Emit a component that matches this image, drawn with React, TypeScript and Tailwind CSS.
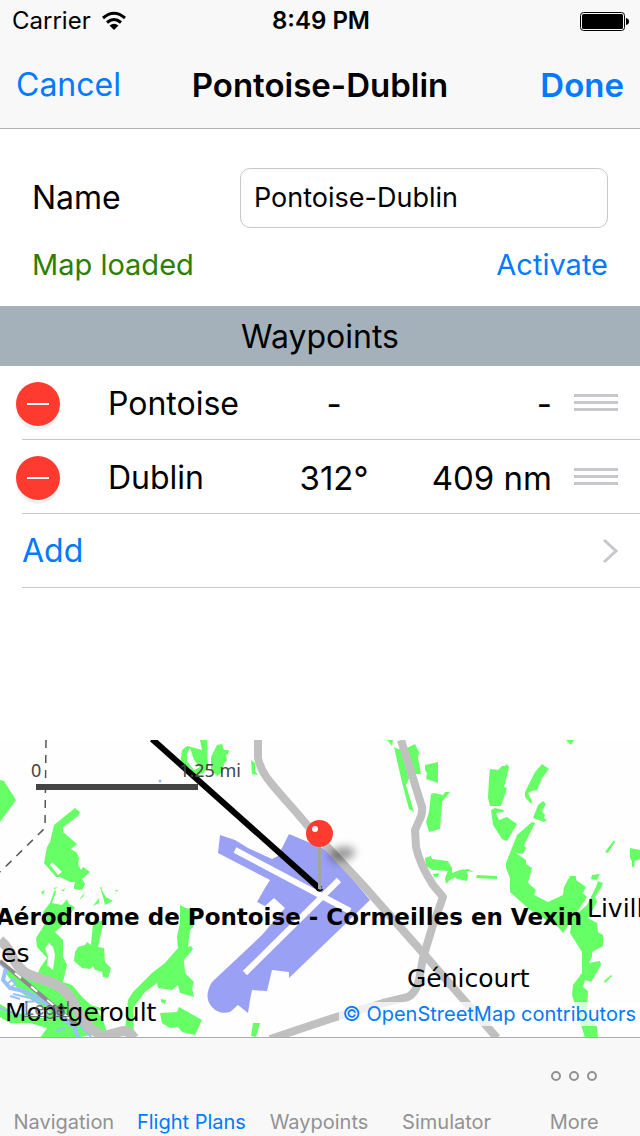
import React, { useState } from 'react';

interface Waypoint {
  id: string;
  name: string;
  bearing: string;
  distance: string;
}

const WAYPOINTS: Waypoint[] = [
  { id: 'pontoise', name: 'Pontoise', bearing: '-', distance: '-' },
  { id: 'dublin', name: 'Dublin', bearing: '312°', distance: '409 nm' },
];

const TABS = ['Navigation', 'Flight Plans', 'Waypoints', 'Simulator', 'More'];

// Woodland outlines, in map units
const WOODS = [
  '0,40 4,41 16,60 0,82',
  '75,68 80,72 78,76 63,87 63,92 77,104 71,109 77,113 79,118 78,124 81,130 83,127 90,132 82,139 85,144 82,150 74,148 75,142 70,142 60,137 56,137 44,123 47,107 50,102 54,85',
  '180,25 182,10 187,6 195,8 202,10 200,0 207,0 208,28 203,33 196,36 190,28 184,25',
  '211,17 217,5 222,4 224,10 229,10 228,14 226,15 227,21 224,23 223,32 217,36 211,30',
  '251,20 255,23 255,31 258,35 252,34',
  '387,0 393,0 392,6',
  '394,7 398,9 407,8 415,4 419,12 418,18 421,34 411,34 406,45 411,62 414,72 409,69 406,58 402,42 398,25',
  '425,25 438,22 438,43 426,39 427,33 425,30',
  '431,54 434,53 443,55 445,52 450,52 442,62 440,89 429,92 426,82 429,72',
  '566,0 574,0 571,5',
  '490,29 498,30 502,26 505,26 507,24 509,27 504,47 507,48 501,66 490,66 488,58 489,38',
  '491,70 495,68 504,70 503,72 496,73 499,80 507,77 517,84 507,101 502,99 493,85',
  '542,24 549,29 542,38 540,43 537,50 532,51 528,53 532,61 531,64 525,57 525,52 535,32',
  '543,61 546,64 542,71 545,75 544,78 547,80 544,82 533,78 538,65',
  '532,82 535,83 528,97 524,105 526,108 523,114 516,113 526,120 526,124 532,128 528,143 536,150 534,155 548,162 563,155 564,147 570,136 576,136 576,140 586,147 583,153 587,157 563,193 558,187 530,170 510,152 510,138 506,128 506,123 517,95',
  '602,145 600,149 595,157 597,162 588,178 597,183 598,192 603,195 603,206 592,212 592,217 589,223 600,221 601,225 591,242 585,240 583,247 588,251 587,272 597,287 598,298 585,298 582,288 572,255 573,245 582,233 582,212 570,193 572,178 587,165 597,145',
  '605,112 614,100 615,102 608,113',
  '630,108 640,110 640,119 635,121 634,127 632,127 632,121 630,118',
  '592,135 600,134 597,140 591,139',
  '598,141 603,143 600,150 595,150',
  '425,118 431,116 432,119 448,121 452,128 452,133 460,130 468,129 474,132 466,131 468,135 467,141 457,139 455,137 450,140 446,144 445,138 448,131 432,130 426,126',
  '433,134 439,133 438,137 434,137',
  '477,135 497,136 497,139 476,138',
  '604,241 611,235 612,236 605,243',
  '55,149 56,152 52,163 62,165 67,159 69,164 75,167 63,185 55,192 63,200 63,217 67,225 63,242 72,245 83,258 97,270 103,280 107,292 75,298 40,298 47,288 30,283 10,283 0,277 0,264 13,272 43,278 50,272 20,252 3,230 12,230 20,235 38,233 40,228 47,218 37,207 36,198 43,187 47,178 43,172 50,163',
  '86,264 101,268 102,271 90,268',
  '93,183 104,180 98,207 104,208 105,222 111,228 108,238 103,237 102,232 95,230 93,226 90,229 82,228 74,221 75,212 78,207 85,205 87,202 91,205',
  '100,147 106,157 113,161 105,165 103,157',
  '74,145 82,145 80,150 74,149',
  '79,160 85,152 83,157',
  '93,166 99,158 99,163',
  '115,150 118,150 117,152',
  '41,152 45,150 43,155',
  '61,151 65,148 64,151',
  '53,148 58,147 55,149',
  '100,147 103,148 101,149',
  '180,165 186,168 195,170 193,187 190,190 188,207 191,206 193,209 184,220 185,233 194,242 192,248 194,257 180,253 178,245 172,250 158,248 157,243 145,252 133,268 134,298 125,290 128,260 133,252 152,233 165,223 178,208 177,197 180,183',
  '160,273 177,272 179,267 202,280 195,295 182,292 178,287 170,288 162,283',
  '161,259 166,260 165,264 161,262',
  '253,283 260,283 256,297 251,296',
];

// Holes left open inside the woodland
const CLEARINGS = [
  '50,125 52,122 62,132 58,135',
  '45,208 49,203 53,207 55,215 53,230 47,225 48,217',
  '187,13 190,8 194,20 200,27 194,30 187,21',
];

const ROADS = [
  'M258 0V18Q260 28 267 38C280 55 295 70 307 85L362 144L423 213L497 298',
  'M401 0L422 67Q423 74 419 81L415 90L416 107Q420 125 433 145L443 157L432 188L423 218L419 240Q416 253 408 257L383 263L333 278L297 290L270 299',
];

function WifiIcon() {
  return (
    <svg viewBox="0 0 26 20" className="h-5 w-[26px]" fill="none" stroke="black" strokeWidth="3" aria-hidden="true">
      <path d="M2 7Q13 -2.5 24 7" />
      <path d="M6 11.5Q13 5.5 20 11.5" />
      <path d="M13 19L8.5 14.5Q13 11 17.5 14.5Z" fill="black" stroke="none" />
    </svg>
  );
}

function BatteryIcon() {
  return (
    <svg viewBox="0 0 50 20" className="h-5 w-[50px]" aria-hidden="true">
      <rect x="0.5" y="1.5" width="44" height="18" rx="3" fill="none" stroke="black" />
      <rect x="2" y="3" width="41" height="15" rx="1.5" />
      <path d="M46 7Q49 7.500 49 10.500Q49 13.500 46 14Z" />
    </svg>
  );
}

function StatusBar() {
  return (
    <div className="grid h-10 grid-cols-[1fr_auto_1fr] items-center pl-3 pr-2.5 pt-0.5 text-[24px] leading-7">
      <div className="flex items-center gap-2.5">
        <span>Carrier</span>
        <WifiIcon />
      </div>
      <div className="text-center font-semibold">8:49 PM</div>
      <div className="flex justify-end">
        <BatteryIcon />
      </div>
    </div>
  );
}

function WaypointRow({ waypoint }: { waypoint: Waypoint }) {
  return (
    <tr>
      <td className="w-[108px] p-0 pl-[22px]">
        <div className="flex h-[74px] items-center border-b border-[#c8c7cc]">
          <button
            type="button"
            aria-label={`Delete ${waypoint.name}`}
            className="-ml-1.5 mt-0.5 flex size-11 items-center justify-center rounded-full bg-[#ff3b30] shadow-[0_4px_1px_#f1f1f1]"
          >
            <span className="h-0.5 w-[22px] bg-white" />
          </button>
        </div>
      </td>
      <td className="border-b border-[#c8c7cc] p-0 pt-0.5">{waypoint.name}</td>
      <td className="w-[120px] border-b border-[#c8c7cc] p-0 pt-0.5 text-center text-[33px]">{waypoint.bearing}</td>
      <td className="w-[158px] border-b border-[#c8c7cc] p-0 pt-0.5 text-right text-[33px]">{waypoint.distance}</td>
      <td className="w-[88px] border-b border-[#c8c7cc] p-0">
        <button type="button" aria-label={`Reorder ${waypoint.name}`} className="ml-[22px] flex w-11 flex-col gap-1">
          <span className="h-[3px] w-full bg-[#c7c7cc]" />
          <span className="h-[3px] w-full bg-[#c7c7cc]" />
          <span className="h-[3px] w-full bg-[#c7c7cc]" />
        </button>
      </td>
    </tr>
  );
}

function RouteMap() {
  return (
    <section aria-label="Map" className="relative h-[297px] overflow-hidden bg-[#fefefe]">
      <svg viewBox="0 0 640 297" preserveAspectRatio="xMidYMid slice" className="h-full w-full">
        <defs>
          <filter id="pin-shadow" x="-50%" y="-80%" width="200%" height="260%">
            <feGaussianBlur stdDeviation="4" />
          </filter>
        </defs>

        {WOODS.map((points) => (
          <polygon key={points} points={points} fill="#66ff66" />
        ))}
        {CLEARINGS.map((points) => (
          <polygon key={points} points={points} fill="#fefefe" />
        ))}

        {/* River */}
        <g fill="none" stroke="#99bfff" strokeLinejoin="round">
          <path d="M0 222L6 228L3 240L10 248L24 251L40 259L52 268L62 278L75 288L78 298" strokeWidth="4" />
          <path d="M7 244L13 239L16 244L11 247M13 254L30 258L42 265M25 262L38 261M10 256L20 259M79 284L92 298" strokeWidth="2" />
          <path d="M0 268L20 276M56 291L65 288" strokeWidth="2" />
        </g>
        <circle cx="160" cy="41" r="1.500" fill="#99bfff" />

        {/* Railway */}
        <path d="M0 221L77 285" stroke="#8c8c8c" strokeWidth="4" />
        <path d="M15 233L77 285" stroke="white" strokeWidth="2" strokeDasharray="8 13" />
        <path
          d="M0 200Q6 205 10 212C16 226 22 232 30 235L50 242Q63 247 70 257L80 275Q88 290 104 296L123 291Q130 291 134 298"
          fill="none"
          stroke="#c0c0c0"
          strokeWidth="10"
        />

        {/* Airfield with its two runways */}
        <path
          d="M220 95L235 100L248 108L272 119L278 116L289 94L320 107L330 112L370 160L338 191L289 238V232L272 230L267 251L252 250L250 260L248 273L238 265L230 272Q219 275 212 267Q203 257 212 242L262 195L285 168L274 158L265 166L257 162L265 148L270 140L218 113Z"
          fill="#9aa0f3"
        />
        <path d="M235 110L350 171M245 233L339 140" stroke="#fefefe" strokeWidth="6" />

        {ROADS.map((d) => (
          <path key={d} d={d} fill="none" stroke="#c0c0c0" strokeWidth="8" strokeLinejoin="round" />
        ))}
        <path d="M46 0L45 88L0 132" fill="none" stroke="#555" strokeWidth="1.500" strokeDasharray="8 7" />

        {/* Planned track */}
        <path d="M152 -1L320 149" stroke="black" strokeWidth="6" />

        <g fontFamily="'DejaVu Sans', sans-serif" fontSize="25">
          <text x="-4" y="185" fontSize="23" fontWeight="bold">Aérodrome de Pontoise - Cormeilles en Vexin</text>
          <text x="587" y="177">Livilliers</text>
          <text x="1" y="222">es</text>
          <text x="407" y="247">Génicourt</text>
          <text x="5" y="281">Montgeroult</text>
        </g>

        {/* Departure pin */}
        <ellipse cx="342" cy="114" rx="13" ry="7" opacity="0.4" filter="url(#pin-shadow)" transform="rotate(-12 342 114)" />
        <path d="M319.500 105V149" stroke="#a3a3a3" strokeWidth="3" />
        <path d="M316.500 149Q319.500 153 322.500 149" fill="none" stroke="black" strokeWidth="1.500" />
        <circle cx="319.500" cy="93.500" r="13.500" fill="#ff3b30" />
        <circle cx="315" cy="89" r="3" fill="white" />
      </svg>

      <div className="absolute left-[31px] top-[18px] w-[210px] font-['Noto_Sans',sans-serif] text-[18px] leading-6 text-[#444]">
        <div className="flex justify-between">
          <span>0</span>
          <span>1.25 mi</span>
        </div>
        <div className="ml-[5px] mt-0.5 h-1.5 w-[162px] bg-[#444]" />
      </div>
      <a href="#legal" className="absolute bottom-4 left-6 text-[18px] leading-6 text-[#555]/80 underline">Legal</a>
      <a
        href="#copyright"
        className="absolute bottom-[11px] right-0 bg-white/75 pl-1 pr-1 text-[20px] leading-6 text-[#007aff]"
      >
        © OpenStreetMap contributors
      </a>
    </section>
  );
}

function MoreIcon() {
  return (
    <svg viewBox="0 0 48 12" className="h-3 w-12" fill="none" stroke="#929292" strokeWidth="2" aria-hidden="true">
      <circle cx="6" cy="6" r="4" />
      <circle cx="24" cy="6" r="4" />
      <circle cx="42" cy="6" r="4" />
    </svg>
  );
}

export default function App() {
  const [name, setName] = useState('Pontoise-Dublin');
  const [activeTab, setActiveTab] = useState('Flight Plans');

  return (
    <div className="flex min-h-screen flex-col bg-white font-['Inter',sans-serif] text-black">
      <header className="border-b border-[#b2b2b2] bg-[#f8f8f8]">
        <StatusBar />
        <div className="grid h-[88px] grid-cols-[1fr_auto_1fr] items-center px-4 pt-0.5 text-[33px] leading-10">
          <button type="button" className="justify-self-start text-[32px] text-[#007aff]">Cancel</button>
          <h1 className="font-semibold">Pontoise-Dublin</h1>
          <button type="button" className="justify-self-end font-semibold text-[#007aff]">Done</button>
        </div>
      </header>

      <main className="flex flex-1 flex-col">
        <div className="px-8 pt-[39px]">
          <div className="flex items-center justify-between">
            <label htmlFor="plan-name" className="text-[32px] leading-10">Name</label>
            <input
              id="plan-name"
              type="text"
              value={name}
              onChange={(e) => setName(e.target.value)}
              className="h-[60px] w-[368px] rounded-[10px] border border-[#c8c8c8] bg-white px-[13px] pb-0.5 text-[27px] leading-9"
            />
          </div>
          <div className="flex h-[78px] items-center justify-between pb-1 text-[29px] leading-10">
            <span className="text-[#2b8000]">Map loaded</span>
            <button type="button" className="text-[#007aff]">Activate</button>
          </div>
        </div>

        <h2 className="flex h-[60px] items-center justify-center bg-[#a5b1ba] pt-0.5 text-[32px] leading-10">Waypoints</h2>

        <div className="flex-1 text-[32px] leading-10">
          <table className="w-full table-fixed border-separate border-spacing-0">
            <colgroup>
              <col className="w-[108px]" />
              <col />
              <col className="w-[120px]" />
              <col className="w-[158px]" />
              <col className="w-[88px]" />
            </colgroup>
            <tbody>
              {WAYPOINTS.map((waypoint) => (
                <WaypointRow key={waypoint.id} waypoint={waypoint} />
              ))}
            </tbody>
          </table>
          <div className="ml-[22px] border-b border-[#c8c7cc]">
            <button type="button" className="flex h-[73px] w-full items-center justify-between pr-[22px] text-[#007aff]">
              Add
              <svg viewBox="0 0 16 26" className="h-[26px] w-4" fill="none" stroke="#c7c7cc" strokeWidth="3" aria-hidden="true">
                <path d="M2 2L14 13L2 24" />
              </svg>
            </button>
          </div>
        </div>

        <RouteMap />
      </main>

      <nav className="grid h-[99px] grid-cols-5 border-t border-[#acacac] bg-[#f8f8f8] pr-0.5">
        {TABS.map((tab) => (
          <button
            key={tab}
            type="button"
            onClick={() => setActiveTab(tab)}
            className={`flex flex-col items-center justify-end text-[20px] leading-7 whitespace-nowrap ${
              tab === activeTab ? 'text-[#007aff]' : 'text-[#929292]'
            }`}
          >
            {tab === 'More' && (
              <span className="mb-[26px] flex">
                <MoreIcon />
              </span>
            )}
            {tab}
          </button>
        ))}
      </nav>
    </div>
  );
}
